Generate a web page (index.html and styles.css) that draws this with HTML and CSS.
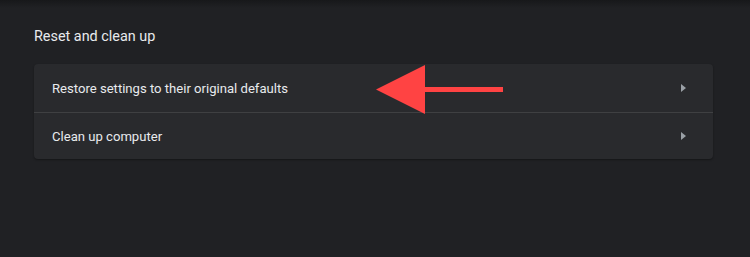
FILE: index.html
```html
<!DOCTYPE html>
<html>
<head>
<meta charset="utf-8">
<link rel="stylesheet" href="styles.css">
</head>
<body>
<div class="page">
  <div class="topshade"></div>
  <section class="section">
    <h2 class="title">Reset and clean up</h2>
    <div class="card">
      <div class="row">
        <span class="label">Restore settings to their original defaults</span>
        <svg class="chev" width="5" height="8" viewBox="0 0 5 8"><path d="M0 0 L5 4 L0 8 Z" fill="#9aa0a6"/></svg>
      </div>
      <div class="row">
        <span class="label">Clean up computer</span>
        <svg class="chev" width="5" height="8" viewBox="0 0 5 8"><path d="M0 0 L5 4 L0 8 Z" fill="#9aa0a6"/></svg>
      </div>
    </div>
  </section>
  <svg class="annot" width="130" height="52" viewBox="0 0 130 52">
    <path d="M0 24.5 L49 0 L49 49 Z" fill="#ff4343"/>
    <rect x="48" y="22" width="79" height="5" fill="#ff4343"/>
  </svg>
</div>
</body>
</html>
```
FILE: styles.css
```css
html, body {
  margin: 0;
  padding: 0;
  background: #202124;
}
.page {
  position: relative;
  width: 750px;
  height: 257px;
  background: #202124;
  font-family: Roboto, "Liberation Sans", sans-serif;
  overflow: hidden;
}
.topshade {
  height: 8px;
  background: linear-gradient(#17181a, #202124);
}
.section {
  padding: 0 37px 0 34px;
}
.title {
  margin: 19px 0 0 0;
  font-size: 14.4px;
  line-height: 20px;
  font-weight: 400;
  color: #e8eaed;
  height: 37px;
}
.card {
  background: #292a2d;
  border-radius: 4px;
  box-shadow: 0 1px 2px rgba(0,0,0,0.35);
}
.row {
  display: flex;
  align-items: center;
  justify-content: space-between;
  height: 48px;
  padding: 0 27px 0 18px;
}
.row + .row {
  border-top: 1px solid #3f4042;
  height: 46px;
}
.label {
  font-size: 13.1px;
  color: #e8eaed;
}
.chev {
  display: block;
}
.annot {
  position: absolute;
  left: 376px;
  top: 65px;
}
```
